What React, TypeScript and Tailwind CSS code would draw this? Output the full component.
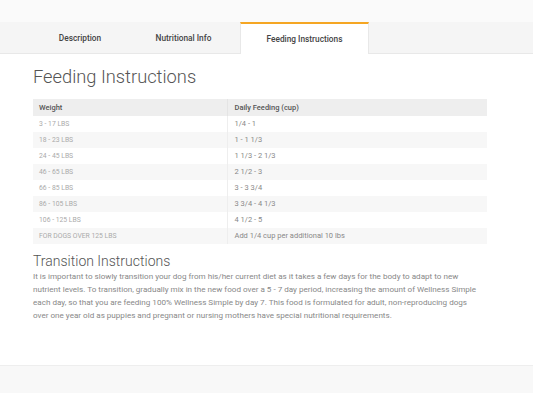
import React from "react";

const rows: [string, string][] = [
  ["3 - 17 LBS", "1/4 - 1"],
  ["18 - 23 LBS", "1 - 1 1/3"],
  ["24 - 45 LBS", "1 1/3 - 2 1/3"],
  ["46 - 65 LBS", "2 1/2 - 3"],
  ["66 - 85 LBS", "3 - 3 3/4"],
  ["86 - 105 LBS", "3 3/4 - 4 1/3"],
  ["106 - 125 LBS", "4 1/2 - 5"],
  ["FOR DOGS OVER 125 LBS", "Add 1/4 cup per additional 10 lbs"],
];

export default function App() {
  return (
    <div className="w-[533px] h-[393px] bg-white flex flex-col overflow-hidden" style={{ fontFamily: "Roboto, 'Liberation Sans', sans-serif" }}>
      <div className="h-[22px] bg-[#fafafa]" />
      <div className="h-[32px] bg-[#f5f5f5] border-b border-[#e8e8e8] flex items-stretch text-[8.3px] font-medium text-[#444]">
        <div className="w-[33px]" />
        <div className="w-[94px] flex items-center justify-center pt-px">Description</div>
        <div className="w-[113px] flex items-center justify-center pt-px">Nutritional Info</div>
        <div className="w-[129px] bg-white border-t-2 border-[#f5a623] border-x border-x-[#e8e8e8] -mb-px flex items-center justify-center">Feeding Instructions</div>
      </div>
      <div className="flex-1 px-[33px] pt-[10px]">
        <h1 className="text-[18.3px] font-light text-[#555] leading-[26px]">Feeding Instructions</h1>
        <table className="mt-[9px] w-[454px] border-collapse text-[7.5px]">
          <thead>
            <tr className="bg-[#eeeeee] h-[17px]">
              <th className="text-left font-medium text-[#555] pl-[6px] w-[194px] border-r border-[#e4e4e4]">Weight</th>
              <th className="text-left font-medium text-[#555] pl-[7px]">Daily Feeding (cup)</th>
            </tr>
          </thead>
          <tbody>
            {rows.map((r, i) => (
              <tr key={i} className={`h-[16px] ${i % 2 === 1 ? "bg-[#f7f7f7]" : "bg-white"}`}>
                <td className="pl-[6px] text-[6.8px] text-[#aaa] border-r border-[#eee]">{r[0]}</td>
                <td className="pl-[7px] text-[#888]">{r[1]}</td>
              </tr>
            ))}
          </tbody>
        </table>
        <h2 className="mt-[9px] text-[14px] font-light text-[#555] leading-[17px]">Transition Instructions</h2>
        <p className="text-[8.1px] leading-[13px] text-[#888] w-[470px] whitespace-nowrap">
          It is important to slowly transition your dog from his/her current diet as it takes a few days for the body to adapt to new
          <br />
          nutrient levels. To transition, gradually mix in the new food over a 5 - 7 day period, increasing the amount of Wellness Simple
          <br />
          each day, so that you are feeding 100% Wellness Simple by day 7. This food is formulated for adult, non-reproducing dogs
          <br />
          over one year old as puppies and pregnant or nursing mothers have special nutritional requirements.
        </p>
      </div>
      <div className="h-[28px] bg-[#f8f8f8] border-t border-[#eeeeee]" />
    </div>
  );
}
